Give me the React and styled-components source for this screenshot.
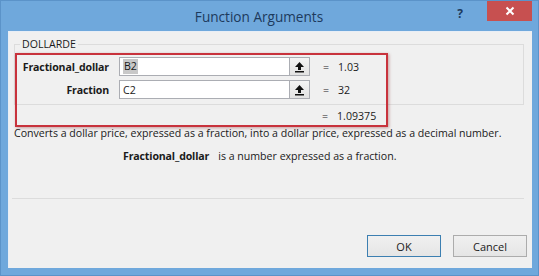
import React from 'react';
import styled, { createGlobalStyle } from 'styled-components';

const Global = createGlobalStyle`
  html, body { margin: 0; padding: 0; }
  body {
    width: 539px; height: 276px; overflow: hidden;
    font-family: "Open Sans", "Noto Sans", sans-serif;
    font-size: 10.6px; color: #1a1a1a;
  }
`;

const Window = styled.div`
  width: 539px; height: 276px; box-sizing: border-box;
  background: #6fa8dc;
  border: 1px solid #5b93c9;
  display: flex; flex-direction: column;
`;

const TitleBar = styled.div`
  height: 30px; display: flex; align-items: flex-start;
`;

const Title = styled.div`
  flex: 1; text-align: center; padding-left: 72px;
  font-size: 13.6px; line-height: 31px; color: #1d3a5c;
`;

const HelpButton = styled.div`
  width: 30px; height: 20px; margin-right: 12px;
  display: flex; align-items: center; justify-content: center;
  font-weight: bold; font-size: 12px; color: #1d3a5c; padding-top: 4px;
  box-sizing: border-box;
`;

const CloseButton = styled.div`
  width: 45px; height: 20px; margin-right: 6px;
  background: #c75050;
  display: flex; align-items: center; justify-content: center;
`;

const Client = styled.div`
  position: relative;
  flex: 1; margin: 0 6px 7px 7px;
  background: #f0f0f0;
  border-left: 1px solid #e8eef6;
  border-top: 1px solid #e8eef6;
  display: flex; flex-direction: column;
`;

const Group = styled.fieldset`
  margin: 5px 8px 0 5px; padding: 6px 0 5px 0;
  border: 1px solid #dcdcdc;
  min-width: 0;
`;

const Legend = styled.legend`
  margin-left: 5px; padding: 0 2px;
  line-height: 14px; font-size: 10.6px; color: #1a1a1a;
`;

const ArgGrid = styled.div`
  display: grid;
  grid-template-columns: 104px 170px 21px auto;
  row-gap: 4px;
  align-items: center;
`;

const ArgLabel = styled.div`
  font-weight: bold; text-align: right; padding-right: 10px;
  letter-spacing: -0.15px;
`;

const Input = styled.div`
  height: 19px; box-sizing: border-box;
  background: #fff; border: 1px solid #abadb3; border-right: none;
  display: flex; align-items: center; padding-left: 3px;
`;

const Sel = styled.span`
  background: #c8c8c8; padding: 0 1px; line-height: 15px;
`;

const PickButton = styled.div`
  height: 19px; box-sizing: border-box;
  border: 1px solid #abadb3;
  background: linear-gradient(#f4f4f4, #e2e2e2);
  display: flex; align-items: center; justify-content: center;
`;

const Value = styled.div`
  display: flex; gap: 9px; padding-left: 13px;
`;

const ResultRow = styled.div`
  display: flex; gap: 9px; padding-left: 313px;
  margin-top: 2px; line-height: 19px;
`;

const Description = styled.div`
  padding-left: 5px; line-height: 14px;
`;

const ArgHelp = styled.div`
  padding-left: 114px; margin-top: 9px; line-height: 14px;
  b { margin-right: 9px; letter-spacing: -0.15px; }
`;

const Separator = styled.div`
  margin: 35px 8px 0 3px; border-top: 1px solid #dcdcdc;
`;

const Buttons = styled.div`
  display: flex; justify-content: flex-end; gap: 12px;
  margin: 36px 5px 0 0;
`;

const Button = styled.div`
  width: 74px; height: 22px; box-sizing: border-box;
  border: 1px solid ${p => (p.$default ? '#3c7fb1' : '#acacac')};
  background: linear-gradient(#f0f0f0, #e5e5e5);
  display: flex; align-items: center; justify-content: center;
  font-size: 11px;
`;

const Highlight = styled.div`
  position: absolute; left: 6px; top: 21px; width: 373px; height: 74px;
  box-sizing: border-box;
  border: 2px solid #c8323c;
  box-shadow: 1px 1px 3px rgba(120, 0, 0, 0.35);
  pointer-events: none;
`;

const UpArrow = () => (
  <svg width="11" height="12" viewBox="0 0 11 12">
    <path d="M5.5 1 L10 6 L7 6 L7 9 L4 9 L4 6 L1 6 Z" fill="#111" />
    <rect x="1" y="10" width="9" height="1.5" fill="#111" />
  </svg>
);

const args = [
  { name: 'Fractional_dollar', ref: 'B2', value: '1.03', selected: true },
  { name: 'Fraction', ref: 'C2', value: '32' },
];

export default function App() {
  return (
    <>
      <Global />
      <Window>
        <TitleBar>
          <Title>Function Arguments</Title>
          <HelpButton>?</HelpButton>
          <CloseButton>
            <svg width="10" height="10" viewBox="0 0 10 10">
              <path d="M1.5 1.5 L8.5 8.5 M8.5 1.5 L1.5 8.5" stroke="#fff" strokeWidth="2" />
            </svg>
          </CloseButton>
        </TitleBar>
        <Client>
          <Group>
            <Legend>DOLLARDE</Legend>
            <ArgGrid>
              {args.map(a => (
                <React.Fragment key={a.name}>
                  <ArgLabel>{a.name}</ArgLabel>
                  <Input>{a.selected ? <Sel>{a.ref}</Sel> : a.ref}</Input>
                  <PickButton><UpArrow /></PickButton>
                  <Value><span>=</span><span>{a.value}</span></Value>
                </React.Fragment>
              ))}
            </ArgGrid>
          </Group>
          <ResultRow><span>=</span><span>1.09375</span></ResultRow>
          <Description>
            Converts a dollar price, expressed as a fraction, into a dollar price, expressed as a decimal number.
          </Description>
          <ArgHelp><b>Fractional_dollar</b>is a number expressed as a fraction.</ArgHelp>
          <Separator />
          <Buttons>
            <Button $default>OK</Button>
            <Button>Cancel</Button>
          </Buttons>
          <Highlight />
        </Client>
      </Window>
    </>
  );
}
